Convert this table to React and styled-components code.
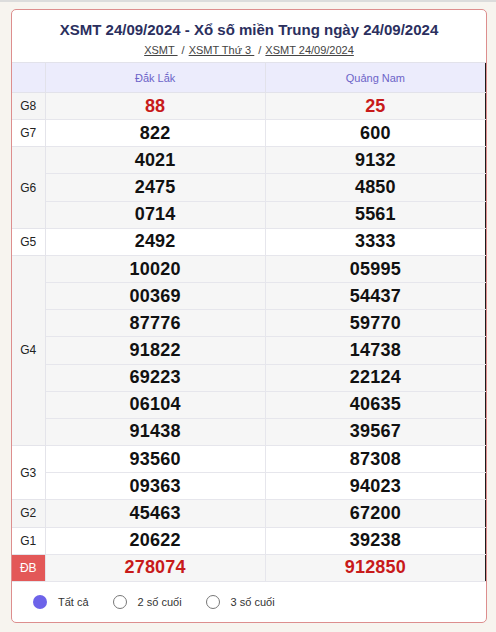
import React from 'react';
import styled, { createGlobalStyle } from 'styled-components';

const GlobalStyle = createGlobalStyle`
  html, body {
    margin: 0;
    padding: 0;
    background: #f7f4ef;
    font-family: "Liberation Sans", Arial, sans-serif;
  }
`;

const prizes = [
  { name: 'G8', a: ['88'], b: ['25'], red: true },
  { name: 'G7', a: ['822'], b: ['600'] },
  { name: 'G6', a: ['4021', '2475', '0714'], b: ['9132', '4850', '5561'] },
  { name: 'G5', a: ['2492'], b: ['3333'] },
  {
    name: 'G4',
    a: ['10020', '00369', '87776', '91822', '69223', '06104', '91438'],
    b: ['05995', '54437', '59770', '14738', '22124', '40635', '39567'],
  },
  { name: 'G3', a: ['93560', '09363'], b: ['87308', '94023'] },
  { name: 'G2', a: ['45463'], b: ['67200'] },
  { name: 'G1', a: ['20622'], b: ['39238'] },
  { name: 'ĐB', a: ['278074'], b: ['912850'], red: true, special: true },
];

function App() {
  return (
    <>
      <GlobalStyle />
      <Page>
        <Card>
          <Title>XSMT 24/09/2024 - Xổ số miền Trung ngày 24/09/2024</Title>
          <Crumbs>
            <a href="#">XSMT </a>
            <Sep>/</Sep>
            <a href="#">XSMT Thứ 3 </a>
            <Sep>/</Sep>
            <a href="#">XSMT 24/09/2024</a>
          </Crumbs>
          <Table>
            <colgroup>
              <col style={{ width: 33 }} />
              <col />
              <col />
            </colgroup>
            <thead>
              <tr>
                <HeadCell />
                <HeadCell>Đắk Lắk</HeadCell>
                <HeadCell>Quảng Nam</HeadCell>
              </tr>
            </thead>
            <tbody>
              {prizes.map((p, i) =>
                p.a.map((num, j) => (
                  <tr key={p.name + j}>
                    {j === 0 && (
                      <Label rowSpan={p.a.length} $shade={i % 2 === 0} $special={p.special}>
                        {p.name}
                      </Label>
                    )}
                    <Num $shade={i % 2 === 0} $red={p.red}>{num}</Num>
                    <Num $shade={i % 2 === 0} $red={p.red}>{p.b[j]}</Num>
                  </tr>
                ))
              )}
            </tbody>
          </Table>
          <Options>
            <Option>
              <Dot $on />
              Tất cả
            </Option>
            <Option>
              <Dot />
              2 số cuối
            </Option>
            <Option>
              <Dot />
              3 số cuối
            </Option>
          </Options>
        </Card>
      </Page>
    </>
  );
}

export default App;

const Page = styled.div`
  min-height: 632px;
  box-sizing: border-box;
  border-top: 2px solid #dcdcdc;
  padding: 7px 9px 0 11px;
`;

const Card = styled.div`
  width: 476px;
  box-sizing: border-box;
  background: #fff;
  border: 1px solid #dd8e8e;
  border-radius: 5px;
  overflow: hidden;
`;

const Title = styled.h1`
  margin: 0;
  padding: 11px 0 0;
  text-align: center;
  font-size: 15px;
  line-height: 18px;
  font-weight: bold;
  color: #2b2f5e;
`;

const Crumbs = styled.div`
  text-align: center;
  font-size: 11px;
  line-height: 14px;
  padding: 4px 0 5px;
  color: #444;

  a {
    color: #444;
    text-decoration: underline;
  }
`;

const Sep = styled.span`
  margin: 0 4px;
`;

const Table = styled.table`
  width: 474px;
  border-collapse: collapse;
  table-layout: fixed;
  border-right: 1px solid #1c1c1c;
`;

const HeadCell = styled.th`
  height: 29px;
  padding: 0;
  background: #ececfc;
  color: #6d64c8;
  font-size: 11px;
  font-weight: normal;
  text-align: center;
  border: 1px solid #e2e2ea;
  border-left: none;
  &:last-child {
    border-right: none;
  }
`;

const Label = styled.td`
  padding: 0;
  text-align: center;
  font-size: 12px;
  color: ${(p) => (p.$special ? '#fff' : '#222')};
  background: ${(p) => (p.$special ? '#e35858' : p.$shade ? '#f5f5f5' : '#fff')};
  border-top: 1px solid #e4e4ea;
  border-bottom: 1px solid #e4e4ea;
  border-right: 1px solid #e4e4ea;
`;

const Num = styled.td`
  height: 26.17px;
  padding: 0;
  text-align: center;
  font-size: 18px;
  font-weight: bold;
  letter-spacing: 0.2px;
  color: ${(p) => (p.$red ? '#c81a1a' : '#111')};
  background: ${(p) => (p.$shade ? '#f6f6f6' : '#fff')};
  border: 1px solid #e6e6ec;
  &:last-child {
    border-right: none;
  }
`;

const Options = styled.div`
  display: flex;
  align-items: center;
  height: 40px;
  padding-left: 21px;
  gap: 24px;
`;

const Option = styled.label`
  display: flex;
  align-items: center;
  gap: 11px;
  font-size: 11px;
  color: #333;
`;

const Dot = styled.span`
  width: 14px;
  height: 14px;
  box-sizing: border-box;
  border-radius: 50%;
  background: ${(p) => (p.$on ? '#6d63e9' : '#fff')};
  border: ${(p) => (p.$on ? 'none' : '1px solid #777')};
`;
